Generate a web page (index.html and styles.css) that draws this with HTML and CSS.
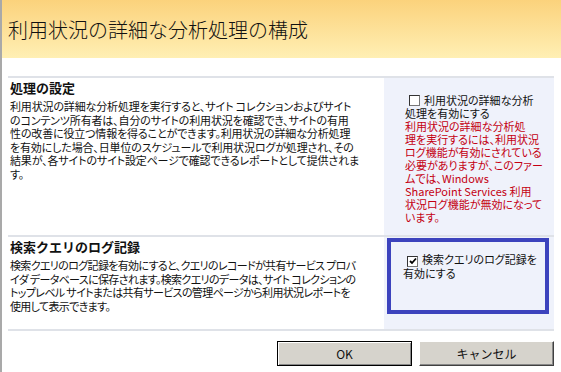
FILE: index.html
```html
<!DOCTYPE html>
<html lang="ja">
<head>
    <meta charset="UTF-8">
    <title>利用状況の詳細な分析処理の構成</title>
    <link rel="stylesheet" href="styles.css">
</head>
<body>
    <div class="dialog">
        <div class="dialog-header">
            <h1>利用状況の詳細な分析処理の構成</h1>
        </div>

        <div class="dialog-body">
            <div class="section section-processing">
                <div class="section-desc">
                    <h2>処理の設定</h2>
                    <p>利用状況の詳細な分析処理を実行すると、サイト コレクションおよびサイト<br>のコンテンツ所有者は、自分のサイトの利用状況を確認でき、サイトの有用<br>性の改善に役立つ情報を得ることができます。利用状況の詳細な分析処理<br>を有効にした場合、日単位のスケジュールで利用状況ログが処理され、その<br>結果が、各サイトのサイト設定ページで確認できるレポートとして提供されま<br>す。</p>
                </div>
                <div class="section-control">
                    <label class="check"><span class="box"></span>利用状況の詳細な分析<br>処理を有効にする</label>
                    <p class="warning">利用状況の詳細な分析処<br>理を実行するには、利用状況<br>ログ機能が有効にされている<br>必要がありますが、このファー<br>ムでは、Windows<br>SharePoint Services 利用<br>状況ログ機能が無効になって<br>います。</p>
                </div>
            </div>

            <div class="section section-query">
                <div class="section-desc">
                    <h2>検索クエリのログ記録</h2>
                    <p class="tight">検索クエリのログ記録を有効にすると、クエリのレコードが共有サービス プロバ<br>イダ データベースに保存されます。検索クエリのデータは、サイト コレクションの<br>トップレベル サイトまたは共有サービスの管理ページから利用状況レポートを<br>使用して表示できます。</p>
                </div>
                <div class="section-control">
                    <div class="focus-box">
                        <label class="check"><span class="box checked"><svg viewBox="0 0 8 8" width="8" height="8"><polyline points="1,4 3,6 7,1.5" fill="none" stroke="#000" stroke-width="1.8"/></svg></span>検索クエリのログ記録を<br>有効にする</label>
                    </div>
                </div>
            </div>

            <div class="buttons">
                <button class="btn btn-default">OK</button>
                <button class="btn">キャンセル</button>
            </div>
        </div>
    </div>
</body>
</html>
```

FILE: styles.css
```css
body {
    margin: 0;
    padding: 0;
    background: white;
    font-family: "Noto Sans CJK JP", sans-serif;
    color: #111;
}

.dialog {
    border-left: 2px solid #a9a9a9;
    height: 372px;
    box-sizing: border-box;
}

.dialog-header {
    height: 58px;
    display: flex;
    align-items: center;
    padding-left: 6px;
    background: linear-gradient(#fbd27c, #ffefb4);
}

.dialog-header h1 {
    margin: 0;
    font-size: 20px;
    font-weight: 300;
    color: #111;
}

.dialog-body {
    padding: 18px 7px 0 6px;
}

.section {
    display: flex;
    border-top: 2px solid #dfe2e8;
}

.section-processing {
    height: 157px;
}

.section-query {
    height: 92px;
    border-bottom: 2px solid #dfe2e8;
}

.section-desc {
    width: 376px;
    padding-left: 2px;
    box-sizing: border-box;
}

.section-desc h2 {
    margin: 2px 0 4px;
    font-size: 13px;
    line-height: 16px;
}

.section-desc p {
    margin: 0;
    font-size: 11px;
    line-height: 13.5px;
    letter-spacing: -0.15px;
    white-space: nowrap;
    font-feature-settings: "palt";
}

.section-desc p.tight {
    letter-spacing: -0.65px;
}

.section-control {
    flex: 1;
    background: #eff2fb;
    font-size: 11px;
    line-height: 13px;
    white-space: nowrap;
    font-feature-settings: "palt";
}

.section-processing .section-control {
    padding: 16px 0 0 21px;
}

.section-query .section-control {
    padding: 1px 5px 0 3px;
}

.focus-box {
    height: 76px;
    border: 4px solid #3c43bd;
    box-sizing: border-box;
    padding: 11px 0 0 12px;
}

.check {
    display: block;
}

.box {
    display: inline-flex;
    align-items: center;
    justify-content: center;
    width: 9px;
    height: 9px;
    margin: 0 4px 0 4px;
    vertical-align: -1px;
    background: white;
    border: 1px solid #777;
    border-top-color: #333;
    border-left-color: #333;
}

.warning {
    margin: 0;
    color: #c40012;
}

.buttons {
    display: flex;
    justify-content: flex-end;
    gap: 7px;
    padding-top: 10px;
}

.btn {
    width: 135px;
    height: 25px;
    padding: 0;
    font-family: "Noto Sans CJK JP", sans-serif;
    font-size: 12px;
    color: #111;
    background: #d6d3cc;
    border: 1px solid;
    border-color: #fff #404040 #404040 #fff;
    box-shadow: inset -1px -1px 0 #888;
}

.btn-default {
    border-color: #000;
    box-shadow: inset 1px 1px 0 #fff, inset -1px -1px 0 #888;
}
```
